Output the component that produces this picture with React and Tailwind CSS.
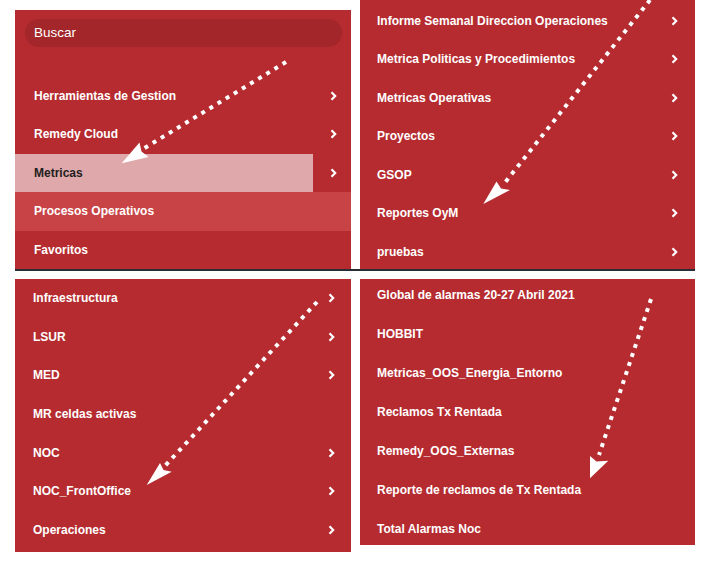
import React from "react";

const FONT = { fontFamily: '"Liberation Sans", Arial, Helvetica, sans-serif' };

function Chevron() {
  return (
    <svg width="7" height="10" viewBox="0 0 7 10" className="shrink-0">
      <polyline points="1.5,1.2 5.2,5 1.5,8.8" fill="none" stroke="white" strokeWidth="2.2" />
    </svg>
  );
}

function Arrow({ from, to, head }) {
  return (
    <g>
      <line
        x1={from[0]}
        y1={from[1]}
        x2={to[0]}
        y2={to[1]}
        stroke="white"
        strokeWidth="4"
        strokeDasharray="4 5.5"
      />
      <polygon points={head.map((p) => p.join(",")).join(" ")} fill="white" />
    </g>
  );
}

const topRight = [
  "Informe Semanal Direccion Operaciones",
  "Metrica Politicas y Procedimientos",
  "Metricas Operativas",
  "Proyectos",
  "GSOP",
  "Reportes OyM",
  "pruebas",
];

const bottomLeft = [
  ["Infraestructura", true],
  ["LSUR", true],
  ["MED", true],
  ["MR celdas activas", false],
  ["NOC", true],
  ["NOC_FrontOffice", true],
  ["Operaciones", true],
];

const bottomRight = [
  "Global de alarmas 20-27 Abril 2021",
  "HOBBIT",
  "Metricas_OOS_Energia_Entorno",
  "Reclamos Tx Rentada",
  "Remedy_OOS_Externas",
  "Reporte de reclamos de Tx Rentada",
  "Total Alarmas Noc",
];

export default function App() {
  return (
    <div className="relative w-[709px] h-[571px] bg-white overflow-hidden" style={FONT}>
      <div className="pl-[15px] flex flex-col">
        {/* top row */}
        <div className="flex items-end gap-[9px]">
          <div className="w-[336px] h-[259px] bg-[#b52b30] flex flex-col overflow-hidden">
            <div className="mt-[9px] ml-[10px] mr-[9px] h-[28px] rounded-full bg-[#a2262a] flex items-center pl-[9px] pt-[1px] text-[13.5px] text-white">
              Buscar
            </div>
            <div className="mt-[29.5px] flex flex-col text-[12px] font-bold text-white">
              <div className="h-[38.5px] flex items-center justify-between pl-[19px] pr-[14px]">
                <span>Herramientas de Gestion</span>
                <Chevron />
              </div>
              <div className="h-[38.5px] flex items-center justify-between pl-[19px] pr-[14px]">
                <span>Remedy Cloud</span>
                <Chevron />
              </div>
              <div className="h-[38.5px] flex">
                <div className="w-[298px] bg-[#dfa9ab] flex items-center pl-[19px] text-[#1e1e1e]">
                  Metricas
                </div>
                <div className="flex-1 flex items-center justify-end pr-[14px]">
                  <Chevron />
                </div>
              </div>
              <div className="h-[38.5px] flex items-center pl-[19px] bg-[#c84346]">
                Procesos Operativos
              </div>
              <div className="h-[38.5px] flex items-center pl-[19px]">Favoritos</div>
            </div>
          </div>
          <div className="w-[335px] h-[269px] bg-[#b52b30] overflow-hidden">
            <div className="pt-[1.5px] flex flex-col text-[12px] font-bold text-white">
              {topRight.map((t) => (
                <div key={t} className="h-[38.5px] shrink-0 flex items-center justify-between pl-[17px] pr-[17px]">
                  <span>{t}</span>
                  <Chevron />
                </div>
              ))}
            </div>
          </div>
        </div>
        <div className="w-[680px] h-[2px] bg-[#2a2d31]" />
        {/* bottom row */}
        <div className="mt-[8px] flex items-start gap-[9px]">
          <div className="w-[336px] h-[273px] bg-[#b52b30] overflow-hidden">
            <div className="flex flex-col text-[12px] font-bold text-white">
              {bottomLeft.map(([t, c]) => (
                <div key={t} className="h-[38.6px] shrink-0 flex items-center justify-between pl-[18px] pr-[16px]">
                  <span>{t}</span>
                  {c ? <Chevron /> : null}
                </div>
              ))}
            </div>
          </div>
          <div className="w-[335px] h-[266px] bg-[#b52b30] overflow-hidden">
            <div className="-mt-[3px] flex flex-col text-[12px] font-bold text-white">
              {bottomRight.map((t) => (
                <div key={t} className="h-[38.9px] shrink-0 flex items-center pl-[17px]">
                  <span>{t}</span>
                </div>
              ))}
            </div>
          </div>
        </div>
      </div>

      {/* annotation arrows */}
      <svg className="absolute inset-0 pointer-events-none" width="709" height="571" viewBox="0 0 709 571">
        <Arrow
          from={[286, 62]}
          to={[143, 149]}
          head={[[121.7, 163.3], [139.5, 142.5], [141.5, 151.5], [148.5, 157]]}
        />
        <Arrow
          from={[650, 0]}
          to={[503, 185]}
          head={[[483.3, 204], [496.5, 181.5], [501, 188.5], [510, 190]]}
        />
        <Arrow
          from={[317, 302]}
          to={[164, 467]}
          head={[[146.7, 485], [160, 463], [163.5, 470], [171.7, 471.7]]}
        />
        <Arrow
          from={[651, 299]}
          to={[599, 455]}
          head={[[590, 478.3], [590, 456], [596.5, 461.5], [608.3, 460.7]]}
        />
      </svg>
    </div>
  );
}
